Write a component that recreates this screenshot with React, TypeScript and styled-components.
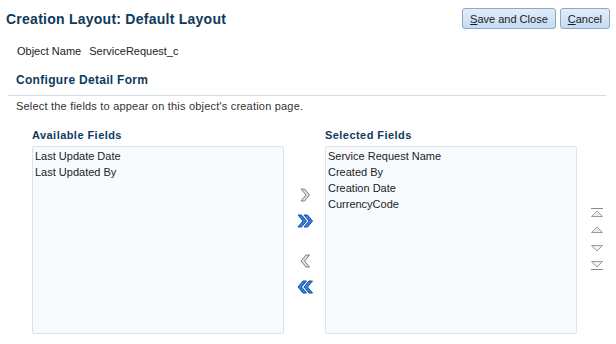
import { createGlobalStyle, styled } from "styled-components";

const GlobalStyle = createGlobalStyle`
    body {
        margin: 0;
        background: #fff;
        font-family: "Liberation Sans", Arial, sans-serif;
        font-size: 11px;
        color: #333;
    }
`;

const available = ["Last Update Date", "Last Updated By"];
const selected = ["Service Request Name", "Created By", "Creation Date", "CurrencyCode"];

const Chevron = ({ dir, color, stroke }: { dir: "right" | "left"; color: string; stroke: string }) => (
    <polygon
        points={dir === "right" ? "1,1 4.5,1 9.5,7 4.5,13 1,13 6,7" : "9.5,1 6,1 1,7 6,13 9.5,13 4.5,7"}
        fill={color}
        stroke={stroke}
        strokeWidth="1"
        strokeLinejoin="round"
    />
);

const MoveIcon = ({ dir, double }: { dir: "right" | "left"; double?: boolean }) =>
    double ? (
        <svg width="18" height="14" viewBox="0 0 18 14">
            <g transform={dir === "right" ? "translate(1 0)" : "translate(7 0)"}>
                <Chevron dir={dir} color="#2f80e2" stroke="#1552a6" />
            </g>
            <g transform={dir === "right" ? "translate(7 0)" : "translate(1 0)"}>
                <Chevron dir={dir} color="#2f80e2" stroke="#1552a6" />
            </g>
        </svg>
    ) : (
        <svg width="18" height="14" viewBox="0 0 18 14">
            <g transform="translate(4 0)">
                <Chevron dir={dir} color="#e2e2e2" stroke="#7d7d7d" />
            </g>
        </svg>
    );

const OrderIcon = ({ up, bar }: { up: boolean; bar?: boolean }) => (
    <svg width="14" height="10" viewBox="0 0 14 10">
        {up ? (
            <>
                {bar && <line x1="1" y1="0.5" x2="13" y2="0.5" stroke="#8a8a8a" />}
                <polygon points="1.5,8.5 7,3 12.5,8.5" fill="#efefef" stroke="#9a9a9a" />
            </>
        ) : (
            <>
                <polygon points="1.5,1.5 7,7 12.5,1.5" fill="#efefef" stroke="#9a9a9a" />
                {bar && <line x1="1" y1="9.5" x2="13" y2="9.5" stroke="#8a8a8a" />}
            </>
        )}
    </svg>
);

const App = () => {
    return (
        <>
            <GlobalStyle />
            <Page>
                <TitleBar>
                    <Title>Creation Layout: Default Layout</Title>
                    <Buttons>
                        <Button><u>S</u>ave and Close</Button>
                        <Button><u>C</u>ancel</Button>
                    </Buttons>
                </TitleBar>

                <ObjectRow>
                    <span>Object Name</span>
                    <span>ServiceRequest_c</span>
                </ObjectRow>

                <SectionTitle>Configure Detail Form</SectionTitle>
                <Divider />
                <Instruction>Select the fields to appear on this object's creation page.</Instruction>

                <Shuttle>
                    <ListColumn>
                        <ListLabel>Available Fields</ListLabel>
                        <ListBox>
                            {available.map((f) => (
                                <ListItem key={f}>{f}</ListItem>
                            ))}
                        </ListBox>
                    </ListColumn>

                    <MoveColumn>
                        <IconButton><MoveIcon dir="right" /></IconButton>
                        <IconButton><MoveIcon dir="right" double /></IconButton>
                        <MoveGap />
                        <IconButton><MoveIcon dir="left" /></IconButton>
                        <IconButton><MoveIcon dir="left" double /></IconButton>
                    </MoveColumn>

                    <ListColumn>
                        <ListLabel>Selected Fields</ListLabel>
                        <ListBox>
                            {selected.map((f) => (
                                <ListItem key={f}>{f}</ListItem>
                            ))}
                        </ListBox>
                    </ListColumn>

                    <OrderColumn>
                        <OrderButton><OrderIcon up bar /></OrderButton>
                        <OrderButton><OrderIcon up /></OrderButton>
                        <OrderGap />
                        <OrderButton><OrderIcon up={false} /></OrderButton>
                        <OrderButton><OrderIcon up={false} bar /></OrderButton>
                    </OrderColumn>
                </Shuttle>
            </Page>
        </>
    );
};

const Page = styled.div`
    width: 616px;
    height: 344px;
    overflow: hidden;
`;

const TitleBar = styled.div`
    display: flex;
    justify-content: space-between;
    align-items: center;
    padding: 8px 6px 0 6px;
`;

const Title = styled.h1`
    margin: 0;
    font-size: 14px;
    font-weight: bold;
    letter-spacing: 0.25px;
    color: #0e3a5c;
`;

const Buttons = styled.div`
    display: flex;
    gap: 4px;
`;

const Button = styled.button`
    height: 21px;
    padding: 0 7px;
    font-family: "Liberation Sans", Arial, sans-serif;
    font-size: 11px;
    color: #1c1c1c;
    border: 1px solid #8aa9cc;
    border-radius: 3px;
    background: linear-gradient(#e1edf9, #c4dbf3);
    cursor: pointer;
`;

const ObjectRow = styled.div`
    display: flex;
    gap: 8px;
    margin-top: 16px;
    padding-left: 17px;
    line-height: 13px;
    color: #222;
`;

const SectionTitle = styled.h2`
    margin: 15px 0 0;
    padding-left: 16px;
    font-size: 12px;
    font-weight: bold;
    letter-spacing: 0.3px;
    line-height: 14px;
    color: #0e3a5c;
`;

const Divider = styled.div`
    margin: 8px 10px 0 8px;
    height: 1px;
    background: #d3dce5;
`;

const Instruction = styled.div`
    margin-top: 4px;
    padding-left: 16px;
    line-height: 13px;
    letter-spacing: 0.2px;
    color: #333;
`;

const Shuttle = styled.div`
    display: flex;
    margin-top: 16px;
    padding-left: 32px;
`;

const ListColumn = styled.div`
    display: flex;
    flex-direction: column;
    width: 252px;
`;

const ListLabel = styled.div`
    font-weight: bold;
    letter-spacing: 0.45px;
    color: #0e3a5c;
    line-height: 13px;
    margin-bottom: 4px;
`;

const ListBox = styled.div`
    box-sizing: border-box;
    height: 188px;
    padding: 1px 2px;
    background: #f7fbfe;
    border: 1px solid #dbe2ea;
    border-radius: 2px;
`;

const ListItem = styled.div`
    line-height: 16px;
    color: #222;
`;

const MoveColumn = styled.div`
    width: 41px;
    display: flex;
    flex-direction: column;
    align-items: center;
    padding-top: 53px;
`;

const IconButton = styled.div`
    height: 26px;
    display: flex;
    align-items: center;
    justify-content: center;
    cursor: pointer;
`;

const MoveGap = styled.div`
    height: 14px;
`;

const OrderColumn = styled.div`
    width: 39px;
    display: flex;
    flex-direction: column;
    align-items: center;
    padding-top: 76px;
`;

const OrderButton = styled.div`
    height: 16px;
    display: flex;
    align-items: center;
    cursor: pointer;
`;

const OrderGap = styled.div`
    height: 4px;
`;

export default App;
